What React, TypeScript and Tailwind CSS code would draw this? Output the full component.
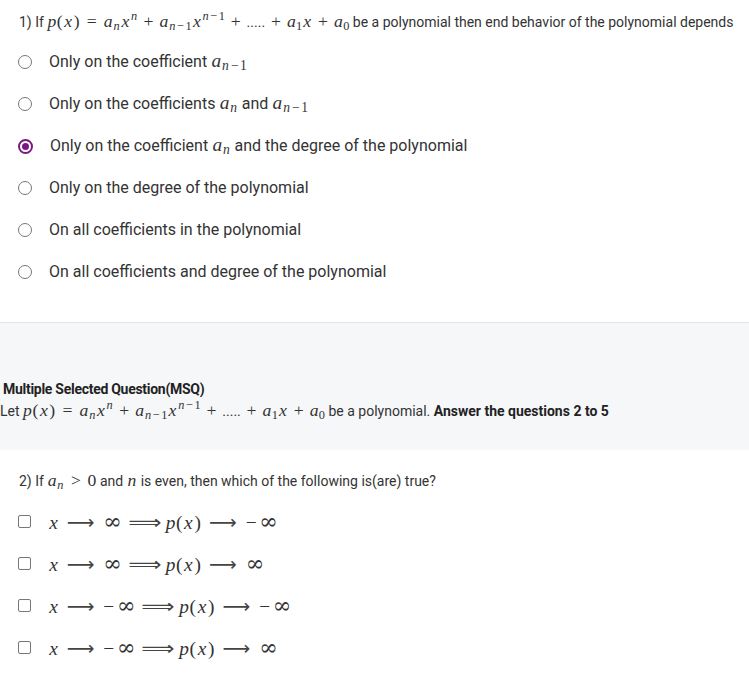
import type { ReactNode } from "react"

// KaTeX-like inline math, sized off the surrounding text
const math = "font-['Liberation_Serif','DejaVu_Serif',serif] leading-none whitespace-nowrap"
const mathSm = `${math} text-[1.26em]`
const mathLg = `${math} text-[1.21em]`

const varWidth: Record<string, string> = {
  x: "w-[0.572em]",
  n: "w-[0.6em]",
  a: "w-[0.529em]",
  p: "w-[0.503em]",
}

function V({ c }: { c: "x" | "n" | "a" | "p" }) {
  return <span className={`inline-block italic text-center ${varWidth[c]}`}>{c}</span>
}

function Paren({ c }: { c: string }) {
  return <span className="inline-block w-[0.389em] text-center">{c}</span>
}

function Op({ c, rel }: { c: string; rel?: boolean }) {
  return (
    <span className={`inline-block w-[0.778em] text-center ${rel ? "mx-[0.278em]" : "mx-[0.222em]"}`}>{c}</span>
  )
}

function Minus() {
  return <span className="inline-block w-[0.778em] text-center">−</span>
}

function Sub({ children }: { children: ReactNode }) {
  return <sub className="text-[0.7em] -bottom-[0.2em]">{children}</sub>
}

function Sup({ children }: { children: ReactNode }) {
  return <sup className="text-[0.7em] -top-[0.55em]">{children}</sup>
}

function Pofx() {
  return (
    <>
      <V c="p" />
      <Paren c="(" />
      <V c="x" />
      <Paren c=")" />
    </>
  )
}

function AnMinus1() {
  return (
    <>
      <V c="a" />
      <Sub>
        <V c="n" />
        <Minus />1
      </Sub>
    </>
  )
}

function An() {
  return (
    <>
      <V c="a" />
      <Sub>
        <V c="n" />
      </Sub>
    </>
  )
}

function Poly() {
  return (
    <span className={mathSm}>
      <Pofx />
      <Op c="=" rel />
      <An />
      <V c="x" />
      <Sup>
        <V c="n" />
      </Sup>
      <Op c="+" />
      <AnMinus1 />
      <V c="x" />
      <Sup>
        <V c="n" />
        <Minus />1
      </Sup>
      <Op c="+" />
      <span className="font-['Roboto'] text-[0.8em]">.....</span>
      <Op c="+" />
      <V c="a" />
      <Sub>1</Sub>
      <V c="x" />
      <Op c="+" />
      <V c="a" />
      <Sub>0</Sub>
    </span>
  )
}

function Radio({ checked }: { checked?: boolean }) {
  return checked ? (
    <span className="w-[15px] h-[15px] rounded-full border-2 border-[#7a1a80] flex items-center justify-center shrink-0">
      <span className="w-[7px] h-[7px] rounded-full bg-[#7a1a80]" />
    </span>
  ) : (
    <span className="w-[14px] h-[14px] rounded-full border border-[#777] shrink-0" />
  )
}

function Check() {
  return <span className="w-[13px] h-[13px] rounded-[2px] border border-[#777] shrink-0" />
}

const q1Options: { label: ReactNode; checked?: boolean }[] = [
  {
    label: (
      <>
        Only on the coefficient{" "}
        <span className={mathLg}>
          <AnMinus1 />
        </span>
      </>
    ),
  },
  {
    label: (
      <>
        Only on the coefficients{" "}
        <span className={mathLg}>
          <An />
        </span>{" "}
        and{" "}
        <span className={mathLg}>
          <AnMinus1 />
        </span>
      </>
    ),
  },
  {
    label: (
      <>
        Only on the coefficient{" "}
        <span className={mathLg}>
          <An />
        </span>{" "}
        and the degree of the polynomial
      </>
    ),
    checked: true,
  },
  { label: "Only on the degree of the polynomial" },
  { label: "On all coefficients in the polynomial" },
  { label: "On all coefficients and degree of the polynomial" },
]

function LongArrow() {
  return (
    <span className="inline-block w-[1.5em] mx-[0.36em] text-center text-[#444] font-['DejaVu_Sans',sans-serif]">
      ⟶
    </span>
  )
}

function Implies() {
  return (
    <span className="inline-block w-[1.638em] mx-[0.278em] text-center text-[#444] font-['DejaVu_Sans',sans-serif]">
      <span className="inline-block scale-x-[1.2]">⟹</span>
    </span>
  )
}

function Inf({ neg }: { neg?: boolean }) {
  return (
    <>
      {neg && <span className="inline-block w-[0.7em] text-center">−</span>}
      <span className="inline-block w-[0.95em] text-center font-['DejaVu_Serif',serif] text-[1.15em]">∞</span>
    </>
  )
}

function Limit({ negX, negP }: { negX?: boolean; negP?: boolean }) {
  return (
    <span className={mathLg}>
      <V c="x" />
      <LongArrow />
      <Inf neg={negX} />
      <Implies />
      <Pofx />
      <LongArrow />
      <Inf neg={negP} />
    </span>
  )
}

const q2Options = [
  { negX: false, negP: true },
  { negX: false, negP: false },
  { negX: true, negP: true },
  { negX: true, negP: false },
]

export default function App() {
  return (
    <div className="w-[749px] min-h-[674px] bg-white font-['Roboto',sans-serif] text-[14px] text-[#333]">
      <section className="pt-[10px] pb-[29px] border-b border-[#e3e4e8]">
        <p className="pl-[19px] h-[24px] flex items-center whitespace-nowrap">
          <span>1) If&nbsp;</span>
          <Poly />
          <span>&nbsp;be a polynomial then end behavior of the polynomial depends</span>
        </p>
        <ul className="mt-[7px]">
          {q1Options.map((o, i) => (
            <li key={i} className="h-[42px] flex items-center pl-[18px] gap-[17px] text-[16px]">
              <Radio checked={o.checked} />
              <span className="whitespace-nowrap">{o.label}</span>
            </li>
          ))}
        </ul>
      </section>

      <section className="bg-[#f6f7f9] pt-[56px] pb-[27px]">
        <h2 className="pl-[3px] h-[20px] leading-[20px] font-bold text-[14px] text-[#222] font-['Liberation_Sans_Narrow','Roboto',sans-serif] tracking-[-0.02em]">
          Multiple Selected Question(MSQ)
        </h2>
        <p className="h-[24px] flex items-center whitespace-nowrap font-['Liberation_Sans_Narrow','Roboto',sans-serif]">
          <span>Let&nbsp;</span>
          <Poly />
          <span>&nbsp;be a polynomial.&nbsp;</span>
          <b className="text-[#222]">Answer the questions 2 to 5</b>
        </p>
      </section>

      <section className="pt-[19px] pb-[16px]">
        <p className="pl-[19px] h-[24px] flex items-center whitespace-nowrap">
          <span>2) If&nbsp;</span>
          <span className={mathSm}>
            <An />
            <Op c="&gt;" rel />0
          </span>
          <span>&nbsp;and&nbsp;</span>
          <span className={mathSm}>
            <V c="n" />
          </span>
          <span>&nbsp;is even, then which of the following is(are) true?</span>
        </p>
        <ul className="mt-[7px]">
          {q2Options.map((o, i) => (
            <li key={i} className="h-[42px] flex items-center pl-[18px] gap-[17px] text-[16px]">
              <Check />
              <Limit negX={o.negX} negP={o.negP} />
            </li>
          ))}
        </ul>
      </section>
    </div>
  )
}
